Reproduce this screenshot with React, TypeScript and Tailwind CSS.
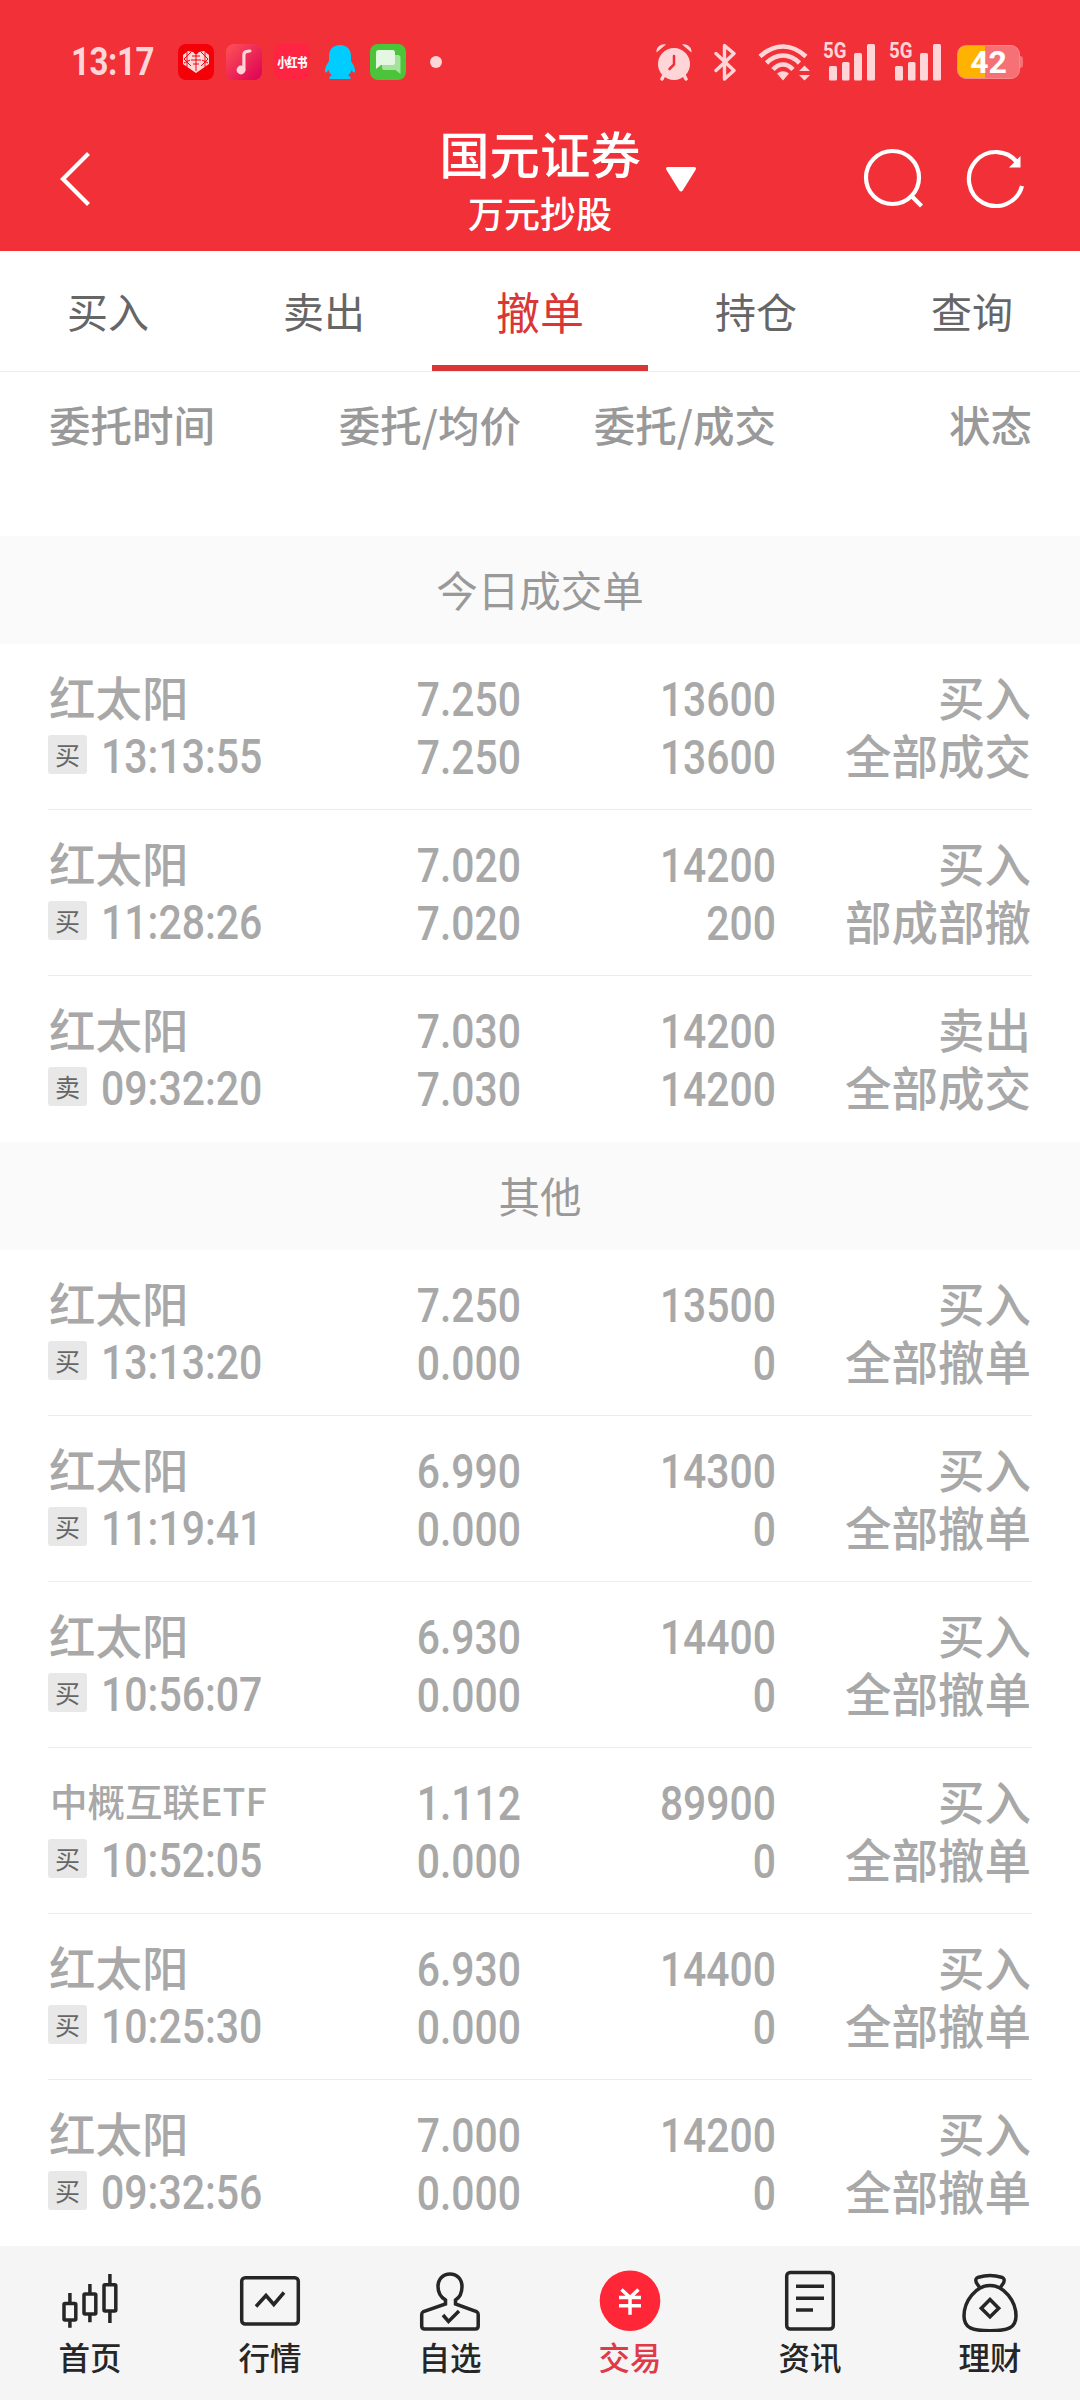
import React from 'react';

type Order = {
    name: string;
    side: string;
    time: string;
    price: string;
    avg: string;
    qty: string;
    done: string;
    action: string;
    status: string;
};

const dealt: Order[] = [
    { name: '红太阳', side: '买', time: '13:13:55', price: '7.250', avg: '7.250', qty: '13600', done: '13600', action: '买入', status: '全部成交' },
    { name: '红太阳', side: '买', time: '11:28:26', price: '7.020', avg: '7.020', qty: '14200', done: '200', action: '买入', status: '部成部撤' },
    { name: '红太阳', side: '卖', time: '09:32:20', price: '7.030', avg: '7.030', qty: '14200', done: '14200', action: '卖出', status: '全部成交' },
];

const others: Order[] = [
    { name: '红太阳', side: '买', time: '13:13:20', price: '7.250', avg: '0.000', qty: '13500', done: '0', action: '买入', status: '全部撤单' },
    { name: '红太阳', side: '买', time: '11:19:41', price: '6.990', avg: '0.000', qty: '14300', done: '0', action: '买入', status: '全部撤单' },
    { name: '红太阳', side: '买', time: '10:56:07', price: '6.930', avg: '0.000', qty: '14400', done: '0', action: '买入', status: '全部撤单' },
    { name: '中概互联ETF', side: '买', time: '10:52:05', price: '1.112', avg: '0.000', qty: '89900', done: '0', action: '买入', status: '全部撤单' },
    { name: '红太阳', side: '买', time: '10:25:30', price: '6.930', avg: '0.000', qty: '14400', done: '0', action: '买入', status: '全部撤单' },
    { name: '红太阳', side: '买', time: '09:32:56', price: '7.000', avg: '0.000', qty: '14200', done: '0', action: '买入', status: '全部撤单' },
];

const tabs = ['买入', '卖出', '撤单', '持仓', '查询'];

const Signal: React.FC = () => (
    <div className="relative h-[38px] w-[53px]">
        <span className="absolute -top-px left-0 origin-left scale-x-[0.85] font-[Roboto] text-[22px] leading-[18px] font-bold">5G</span>
        <svg className="h-[38px] w-[53px]" viewBox="0 0 53 38" fill="currentColor">
            <rect x="6" y="23" width="8" height="14.5" rx="1.5" />
            <rect x="19" y="19" width="7.5" height="18.5" rx="1.5" />
            <rect x="31" y="10" width="8" height="27.5" rx="1.5" />
            <rect x="44" y="1" width="8" height="36.5" rx="1.5" />
        </svg>
    </div>
);

const StatusBar: React.FC = () => (
    <div className="flex h-[124px] items-center pl-[71px] text-[#ffd5d7]">
        <div className="w-[107px]">
            <span className="inline-block origin-left scale-x-[0.87] font-[Roboto] text-[38px] leading-none font-bold tracking-[-0.5px]">13:17</span>
        </div>
        <svg className="h-9 w-9" viewBox="0 0 36 36">
            <rect width="36" height="36" rx="8" fill="#f40009" />
            <path d="M5 11l5-4 5 1 3 3 3-3 5-1 5 4v9L18 29 5 20z" fill="#ffd9da" />
            <path d="M9 8v15M13 8l-7 7 7 7M27 8v15M23 8l7 7-7 7M14 12h8M13 16h10M15 20h6M18 11v16M6 19l6-3M30 19l-6-3" stroke="#f40009" strokeWidth="1" fill="none" />
        </svg>
        <svg className="ml-3 h-9 w-9" viewBox="0 0 36 36">
            <defs>
                <linearGradient id="music" x1="0" y1="0" x2="1" y2="1">
                    <stop offset="0" stopColor="#ff5257" />
                    <stop offset="1" stopColor="#dc0055" />
                </linearGradient>
            </defs>
            <rect width="36" height="36" rx="8" fill="url(#music)" />
            <circle cx="15" cy="26" r="4.4" fill="#ffd5d9" />
            <path d="M17.9 26V11q0-3.5 3.5-3.7l2.5-.3" fill="none" stroke="#ffd5d9" strokeWidth="3.2" strokeLinecap="round" />
        </svg>
        <div className="ml-3 flex h-9 w-9 items-center justify-center rounded-lg bg-[#ff2442] text-white">
            <span className="scale-y-[1.2] text-[10.5px] font-black tracking-[-0.6px] whitespace-nowrap">小红书</span>
        </div>
        <svg className="ml-[14px] h-9 w-[32px]" viewBox="0 0 32 36" fill="#0cf">
            <path d="M16 1c7.500 0 11 5 11 11v5c2 3 4.500 7 4 11-1 1.500-2.500-.5-3.500-2-.5 2.500-2 4-3.500 5.500 2 .6 3 1.500 2.500 3.500h-21c-.5-2 .5-2.900 2.500-3.500C6.500 30 5 28.500 4.500 26 3.500 27.500 2 29.500 1 28c-.5-4 2-8 4-11v-5C5 6 8.500 1 16 1z" />
        </svg>
        <svg className="ml-[14px] h-9 w-9" viewBox="0 0 36 36">
            <rect width="36" height="36" rx="8" fill="#4bc43a" />
            <path d="M14 11h14q2.500 0 2.500 2.500V30l-5-4H14q-2 0-2-2V13q0-2 2-2z" fill="#a5e29b" />
            <path d="M8.500 6h14q2.500 0 2.500 2.500v10q0 2.500-2.500 2.500H11l-5 4V8.500Q6 6 8.500 6z" fill="#e4f8e1" />
        </svg>
        <span className="ml-6 h-3 w-3 rounded-full bg-[#ffd5d7]" />

        <svg className="ml-[213px] h-[38px] w-[38px]" viewBox="0 0 38 38">
            <path d="M10 30l-3 6M28 30l3 6" stroke="currentColor" strokeWidth="3.5" strokeLinecap="round" />
            <circle cx="19" cy="21" r="16" fill="currentColor" />
            <path d="M1.500 9.500C1 4 6 0 11 1.500zM36.500 9.500C37 4 32 0 27 1.500z" fill="currentColor" />
            <path d="M19 13v8.500l-4.500 4.500" stroke="#f03038" strokeWidth="2.5" fill="none" strokeLinecap="round" />
        </svg>
        <svg className="ml-5 h-[38px] w-[24px]" viewBox="0 0 24 38" fill="none" stroke="currentColor" strokeWidth="3.4" strokeLinejoin="round" strokeLinecap="round">
            <path d="M3 10.500l18 17-9.500 8.500V2.500l9.500 8L3 27.500" />
        </svg>
        <svg className="ml-[21px] h-[38px] w-[52px]" viewBox="0 0 52 38" fill="none" stroke="currentColor" strokeWidth="4.6">
            <path d="M2 13.500Q13 3.500 25 3.500T48 13.500M8.500 20Q16 12.500 25 12.500T41.500 20M15 26.500Q19.500 21.500 25 21.500T35 26.500" />
            <path d="M19 30.500q6-4.500 12 0l-6 7z" fill="currentColor" stroke="none" />
            <path d="M46.500 22.500l5.500 5.500h-11zM46.500 37.500l5.500-5.500h-11z" fill="currentColor" stroke="none" />
        </svg>
        <div className="ml-[13px] flex gap-[13px]">
            <Signal />
            <Signal />
        </div>
        <div className="ml-[15px] flex items-center">
            <div className="flex h-[34px] w-[63px] items-center justify-center rounded-[9px] border border-[#f8888c] bg-linear-to-r from-[#ffb300] from-45% to-[#f67176] to-45% font-[Roboto] text-[32px] font-bold text-white">42</div>
            <div className="h-3 w-[3px] rounded-r bg-[#f67176]" />
        </div>
    </div>
);

const Header: React.FC = () => (
    <div className="relative flex h-[127px] items-start justify-between pr-[54px] pl-[58px] text-white">
        <svg className="mt-[26px] h-[58px] w-[36px]" viewBox="0 0 36 58" fill="none" stroke="currentColor" strokeWidth="4.2">
            <path d="M30.500 3.500L5 29l25.500 25.500" />
        </svg>
        <div className="absolute inset-x-0 -top-[3px] text-center">
            <div className="text-[50.4px] leading-[64px] font-medium">国元证券</div>
            <div className="mt-1 text-[36px] leading-[46px] font-medium">万元抄股</div>
        </div>
        <svg className="absolute top-[43px] left-[665px] h-[26px] w-[32px]" viewBox="0 0 32 26" fill="currentColor">
            <path d="M3 0h26q3 0 1.500 3L18 23q-2 3-4 0L1.500 3Q0 0 3 0z" />
        </svg>
        <div className="mt-[22px] flex gap-[40px]">
            <svg className="h-[62px] w-[64px]" viewBox="0 0 64 62" fill="none" stroke="currentColor" strokeWidth="4.2">
                <circle cx="32.500" cy="31.500" r="26.500" />
                <path d="M51.500 50l10 10" />
            </svg>
            <svg className="h-[62px] w-[62px]" viewBox="0 0 62 62" fill="none" stroke="currentColor" strokeWidth="4.2">
                <path d="M54 17.500A27 27 0 1 0 58 40" />
                <path d="M56.500 10v11.500H45z" fill="currentColor" stroke="none" />
            </svg>
        </div>
    </div>
);

const Section: React.FC<{ title: string }> = ({ title }) => (
    <div className="flex h-[108px] items-center justify-center bg-[#fafafa] pb-px text-[41.5px] text-[#999]">{title}</div>
);

const Num: React.FC<{ children: string }> = ({ children }) => (
    <div className="origin-right scale-x-[0.86] font-[Roboto] text-[47.5px] leading-[58px] font-medium">{children}</div>
);

const Row: React.FC<{ order: Order; last: boolean }> = ({ order, last }) => (
    <div className="mx-12 grid h-[166px] grid-cols-[220px_253px_255px_256px] items-start text-right text-[46.5px] leading-[58px] font-medium text-[#a8a8a8]">
        <div className="pt-[23px] text-left whitespace-nowrap">
            <div className={order.name.length > 3 ? 'pl-[2px] text-[37.5px]' : 'pl-px'}>{order.name}</div>
            <div className="flex h-[58px] items-center">
                <span className="flex h-[39px] w-[39px] shrink-0 items-center justify-center rounded-[3px] bg-[#e8e8e8] text-[25px] font-normal text-[#666]">{order.side}</span>
                <span className="ml-[14px] origin-left scale-x-[0.863] pt-1.5 font-[Roboto] text-[47.5px]">{order.time}</span>
            </div>
        </div>
        <div className="pt-[27px]">
            <Num>{order.price}</Num>
            <Num>{order.avg}</Num>
        </div>
        <div className="pt-[27px]">
            <Num>{order.qty}</Num>
            <Num>{order.done}</Num>
        </div>
        <div className="pt-[23px] pr-px">
            <div>{order.action}</div>
            <div>{order.status}</div>
        </div>
        {!last && <div className="col-span-4 -mt-px h-px self-end bg-[#ececec]" />}
    </div>
);

const icons = {
    home: (
        <g>
            <rect x="5" y="33.5" width="11.800" height="16.5" rx="1" />
            <path d="M10.900 23v10M10.900 50v7.700" />
            <rect x="25" y="24" width="11.800" height="20" rx="1" />
            <path d="M30.900 14v10M30.900 44v8.300" />
            <rect x="45" y="14.700" width="11.800" height="26.300" rx="1" />
            <path d="M50.900 4v10M50.900 41v12" />
        </g>
    ),
    market: (
        <g>
            <rect x="2.700" y="7.700" width="56.600" height="46.300" rx="3.5" />
            <path d="M17 36.500L27 25.500l7.800 9L45 22.500" />
        </g>
    ),
    picks: (
        <g>
            <path d="M26.500 34v-4C21.500 27 19 22 19 16.500 19 9 24 4 31 4s12 5 12 12.500C43 22 41.500 27 36.500 30v4l21 7.500q1.700 1 1.700 3V56q0 3-3 3H5.700q-3 0-3-3V44.500q0-2 1.800-3z" />
            <path d="M24 45l5.500 6.500L40 41" />
        </g>
    ),
    trade: (
        <g>
            <circle cx="31" cy="30.700" r="30.300" fill="#ff2638" stroke="none" />
            <path d="M22.500 19.500l8.500 8 8.500-8M20 27.500h22M20 35.700h22M31 28v16.700" stroke="white" />
        </g>
    ),
    news: (
        <g>
            <rect x="7.700" y="2.500" width="46.600" height="56.500" rx="3.5" />
            <path d="M17 16.300h28M17 28.300h28M17 40h17" />
        </g>
    ),
    wealth: (
        <g>
            <path d="M21 18l-3.500-5q-2-4.500 2-5.800Q31 4 42.500 7.200q4 1.300 2 5.800L41 18" />
            <path d="M31 15.500C17 15.500 5 31 5 46 5 58 13 60.800 31 60.800S57 58 57 46C57 31 45 15.500 31 15.500z" />
            <path d="M31 29.500l8.700 8.700-8.700 8.700-8.700-8.700z" />
        </g>
    ),
};

const navItems = [
    { label: '首页', icon: icons.home },
    { label: '行情', icon: icons.market },
    { label: '自选', icon: icons.picks },
    { label: '交易', icon: icons.trade, active: true },
    { label: '资讯', icon: icons.news },
    { label: '理财', icon: icons.wealth },
];

const App: React.FC = () => {
    return (
        <div className="h-[2400px] w-[1080px] overflow-hidden bg-white font-['Noto_Sans_CJK_SC',sans-serif]">
            <div className="h-[251px] bg-[#f13038]">
                <StatusBar />
                <Header />
            </div>

            <div className="grid h-[121px] grid-cols-5 border-b border-[#ececec] text-[41px] text-[#666]">
                {tabs.map((tab) =>
                    tab === '撤单' ? (
                        <div key={tab} className="flex items-center justify-center border-b-[6px] border-[#d93636] pt-[5px] text-[44px] text-[#d93636]">{tab}</div>
                    ) : (
                        <div key={tab} className="flex items-center justify-center">{tab}</div>
                    )
                )}
            </div>

            <div className="mx-12 grid h-[164px] grid-cols-[220px_253px_255px_256px] pt-[22px] text-right text-[41.5px] leading-[60px] font-medium text-[#999]">
                <div className="pl-px text-left">委托时间</div>
                <div>委托/均价</div>
                <div>委托/成交</div>
                <div>状态</div>
            </div>

            <Section title="今日成交单" />
            {dealt.map((order, i) => (
                <Row key={order.time} order={order} last={i === dealt.length - 1} />
            ))}
            <Section title="其他" />
            {others.map((order, i) => (
                <Row key={order.time} order={order} last={i === others.length - 1} />
            ))}

            <div className="grid h-[154px] grid-cols-6 bg-[#f5f5f5] text-[#262626]">
                {navItems.map((item) => (
                    <div key={item.label} className="flex flex-col items-center pt-6">
                        <svg className="h-[62px] w-[62px]" viewBox="0 0 62 62" fill="none" stroke="currentColor" strokeWidth="3.5">
                            {item.icon}
                        </svg>
                        <span className={item.active ? 'mt-0.5 text-[31.5px] leading-[44px] font-medium text-[#e03a48]' : 'mt-0.5 text-[31.5px] leading-[44px] font-medium'}>{item.label}</span>
                    </div>
                ))}
            </div>
        </div>
    );
};

export default App;
